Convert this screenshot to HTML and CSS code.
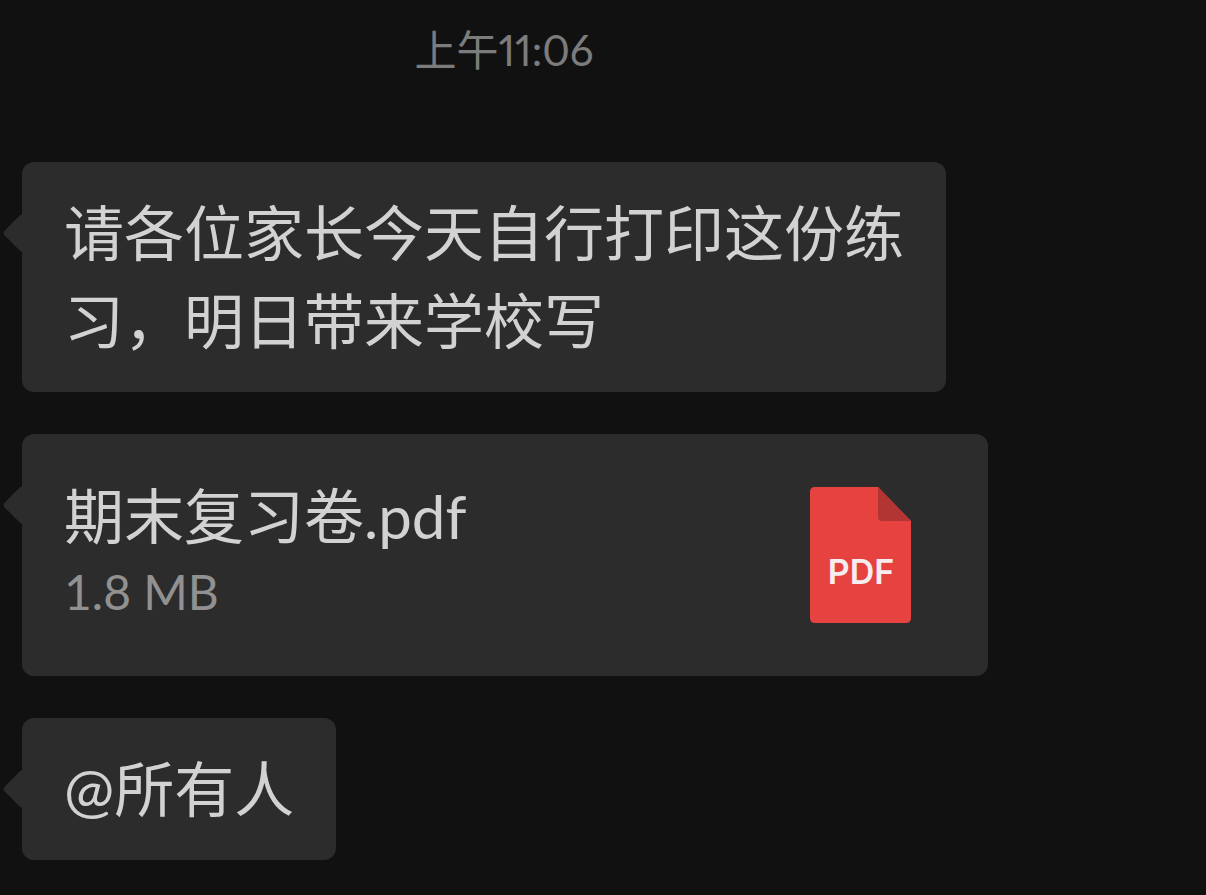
FILE: index.html
```html
<!DOCTYPE html>
<html lang="zh-CN">
	<head>
		<meta charset="UTF-8">
		<title>聊天</title>
		<link rel="stylesheet" href="styles.css">
	</head>
	<body>
		<div class="chat">
			<p class="time">上午11:06</p>
			<div class="bubble text">
				<p>请各位家长今天自行打印这份练习，明日带来学校写</p>
			</div>
			<div class="bubble file">
				<div class="info">
					<p>期末复习卷.pdf</p>
					<p class="size">1.8 MB</p>
				</div>
				<svg class="icon" viewBox="0 0 101 136">
					<path fill="#e64340" d="M5 0H68L101 34V131Q101 136 96 136H5Q0 136 0 131V5Q0 0 5 0Z"/>
					<path fill="#b33533" d="M68 0L101 34H72Q68 34 68 30Z"/>
					<text x="51" y="97" text-anchor="middle">PDF</text>
				</svg>
			</div>
			<div class="bubble">
				<p>@所有人</p>
			</div>
		</div>
	</body>
</html>
```
FILE: styles.css
```css
body,p{
	margin: 0;
	padding: 0;
}

body{
	background-color: #111;
	color: #d2d2d2;
	font-family: Lato, "Noto Sans CJK SC", sans-serif;
	font-size: 60px;
	line-height: 88px;
}
.chat{
	display: flex;
	flex-direction: column;
	align-items: flex-start;
	gap: 42px;
	padding: 20px 22px 34px;
}
.time{
	align-self: stretch;
	margin-bottom: 40px;
	padding-right: 198px;
	text-align: center;
	color: #7c7c7c;
	font-size: 42px;
	line-height: 60px;
	font-variant-numeric: proportional-nums;
}
.bubble{
	position: relative;
	box-sizing: border-box;
	max-width: 100%;
	padding: 27px 42px;
	border-radius: 12px;
	background-color: #2c2c2c;
}
/* arrow on the left side */
.bubble:before{
	content: "";
	position: absolute;
	left: -14px;
	top: 57px;
	width: 28px;
	height: 28px;
	border-radius: 4px;
	background-color: #2c2c2c;
	transform: rotate(45deg);
}
.text{
	width: 924px;
}
.file{
	display: flex;
	justify-content: space-between;
	align-items: flex-start;
	width: 966px;
	padding: 38px 77px 52px 42px;
}
.size{
	color: #919191;
	font-size: 48px;
	line-height: 64px;
}
.icon{
	width: 101px;
	height: 136px;
	margin-top: 15px;
}
.icon text{
	fill: #f6eeee;
	font-family: Inter, sans-serif;
	font-size: 34px;
	font-weight: 600;
}
```
